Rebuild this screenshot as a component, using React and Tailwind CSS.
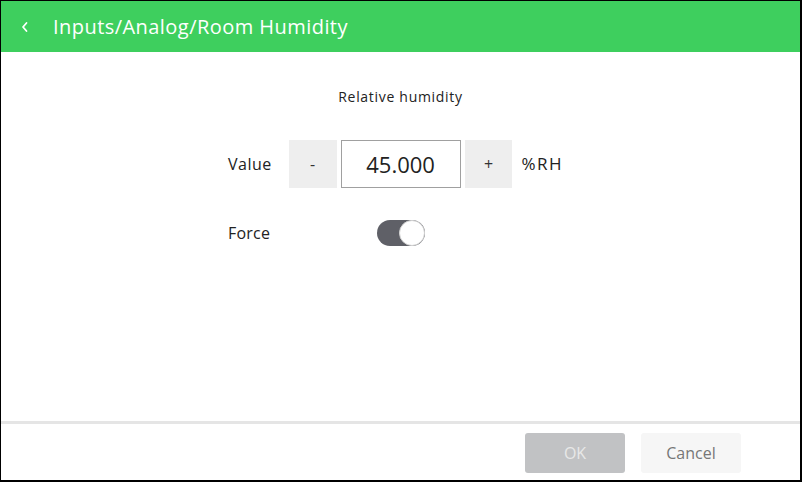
import React, { useState } from "react"

const font = { fontFamily: '"Open Sans", "Noto Sans", sans-serif' }

export default function App() {
  const [value, setValue] = useState("45.000")
  const [force, setForce] = useState(true)

  return (
    <div
      className="w-[802px] h-[482px] flex flex-col bg-white border-l border-t border-r-2 border-b-2 border-black overflow-hidden"
      style={font}
    >
      <div className="h-[51px] shrink-0 bg-[#3ecf5e] flex items-center text-white">
        <div className="w-[52px] flex justify-center pr-[5px]">
          <svg width="10" height="14" viewBox="0 0 10 14" fill="none">
            <path d="M6.5 3 L3 7 L6.5 11" stroke="white" strokeWidth="1.8" strokeLinecap="round" strokeLinejoin="round" />
          </svg>
        </div>
        <span className="text-[20px] tracking-[0.45px]">Inputs/Analog/Room Humidity</span>
      </div>

      <div className="flex-1 flex flex-col items-center">
        <p className="mt-[35px] text-[14px] text-[#222] leading-5 tracking-[0.7px]">Relative humidity</p>

        <div className="mt-[33px] w-[335px] ml-[-10px] flex flex-col">
          <div className="flex items-center h-12">
            <span className="w-[61px] text-[16px] text-[#222] tracking-[0.5px]">Value</span>
            <button className="w-12 h-12 bg-[#eeeeee] text-[#333] text-[16px]">-</button>
            <input
              className="ml-1 w-[120px] h-12 border border-[#a0a0a0] text-center text-[22px] text-[#222] outline-none"
              style={font}
              value={value}
              onChange={(e) => setValue(e.target.value)}
            />
            <button className="ml-1 w-12 h-12 bg-[#eeeeee] text-[#333] text-[16px]">+</button>
            <span className="ml-[9px] text-[17px] text-[#222] tracking-[1.5px]">%RH</span>
          </div>

          <div className="flex items-center mt-[32px] h-[26px]">
            <span className="w-[149px] text-[16px] text-[#222] tracking-[0.2px]">Force</span>
            <button
              className="relative w-12 h-[26px] rounded-full bg-[#5f6067]"
              onClick={() => setForce(!force)}
            >
              <span className="absolute right-0 top-0 w-[26px] h-[26px] rounded-full bg-white border border-[#d4d4d4]" />
            </button>
          </div>
        </div>
      </div>

      <div className="h-[3px] bg-[#e5e5e5] shrink-0" />
      <div className="h-[56px] shrink-0 flex items-start justify-end pt-[9px] pr-[59px] gap-4">
        <button className="w-[100px] h-10 rounded-[3px] bg-[#c1c2c4] text-[#e8e8e8] text-[16px]">OK</button>
        <button className="w-[100px] h-10 rounded-[3px] bg-[#f6f6f6] text-[#777] text-[16px]">Cancel</button>
      </div>
    </div>
  )
}
